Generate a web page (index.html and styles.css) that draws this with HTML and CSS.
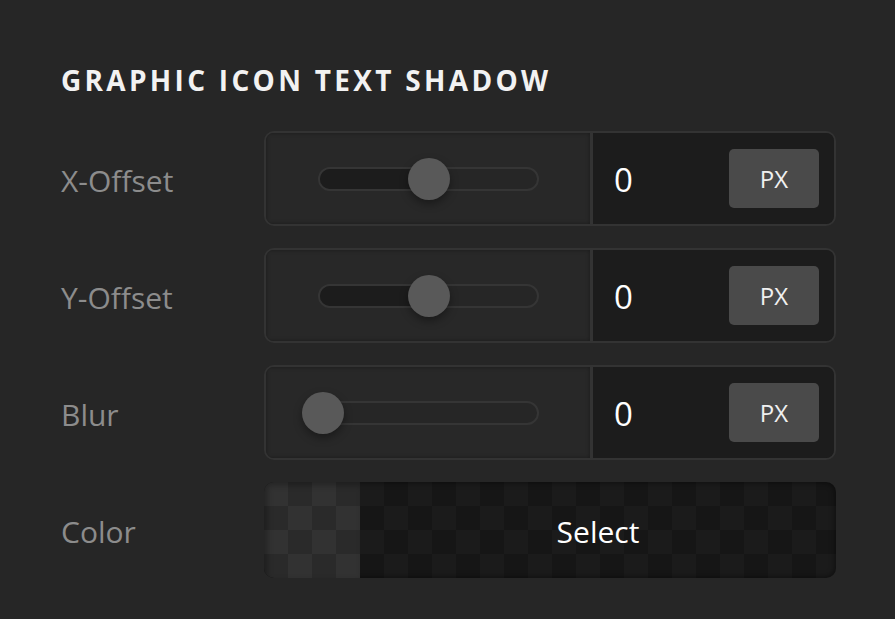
FILE: index.html
```html
<!DOCTYPE html>
<html>
<head>
<meta charset="utf-8">
<link rel="stylesheet" href="styles.css">
</head>
<body>
<div class="panel">
  <h2 class="title">GRAPHIC ICON TEXT SHADOW</h2>
  <div class="rows">
    <div class="row">
      <div class="label">X-Offset</div>
      <div class="control">
        <div class="slider-part">
          <div class="track">
            <div class="fill" style="width:50%"></div>
            <div class="thumb" style="left:50%"></div>
          </div>
        </div>
        <div class="value-part">
          <span class="value">0</span>
          <span class="unit">PX</span>
        </div>
      </div>
    </div>
    <div class="row">
      <div class="label">Y-Offset</div>
      <div class="control">
        <div class="slider-part">
          <div class="track">
            <div class="fill" style="width:50%"></div>
            <div class="thumb" style="left:50%"></div>
          </div>
        </div>
        <div class="value-part">
          <span class="value">0</span>
          <span class="unit">PX</span>
        </div>
      </div>
    </div>
    <div class="row">
      <div class="label">Blur</div>
      <div class="control">
        <div class="slider-part">
          <div class="track">
            <div class="fill" style="width:0%"></div>
            <div class="thumb" style="left:1.2%"></div>
          </div>
        </div>
        <div class="value-part">
          <span class="value">0</span>
          <span class="unit">PX</span>
        </div>
      </div>
    </div>
    <div class="row">
      <div class="label">Color</div>
      <div class="color-box">
        <div class="swatch"></div>
        <div class="select">Select</div>
      </div>
    </div>
  </div>
</div>
</body>
</html>
```
FILE: styles.css
```css
html, body {
  margin: 0;
  padding: 0;
  background: #262626;
  font-family: "Open Sans", "DejaVu Sans", sans-serif;
}
.panel {
  padding: 58px 59px 0 61px;
}
.title {
  margin: 0 0 29px 0;
  font-size: 28px;
  font-weight: 700;
  letter-spacing: 3.3px;
  color: #f2f2f2;
  line-height: 44px;
}
.rows {
  display: flex;
  flex-direction: column;
  gap: 22px;
}
.row {
  display: grid;
  grid-template-columns: 203px 572px;
  align-items: center;
}
.label {
  font-size: 30px;
  color: #8c8c8c;
  padding-top: 3px;
}
.control {
  display: flex;
  height: 95px;
  box-sizing: border-box;
  border: 2px solid #333333;
  border-radius: 10px;
  overflow: hidden;
}
.slider-part {
  width: 327px;
  background: #282828;
  border-right: 3px solid #333333;
  display: flex;
  align-items: center;
  padding-left: 52px;
  box-sizing: border-box;
  box-shadow: inset 0 0 4px rgba(0, 0, 0, 0.35);
}
.track {
  position: relative;
  width: 221px;
  height: 24px;
  box-sizing: border-box;
  border: 2px solid #353535;
  border-radius: 12px;
  background: #262626;
}
.fill {
  height: 100%;
  background: #1c1c1c;
  border-radius: 10px 0 0 10px;
}
.thumb {
  position: absolute;
  top: 50%;
  width: 42px;
  height: 42px;
  margin-left: -21px;
  margin-top: -21px;
  border-radius: 50%;
  background: #595959;
  box-shadow: 0 4px 8px rgba(0, 0, 0, 0.35);
}
.value-part {
  flex: 1;
  background: #1c1c1c;
  display: flex;
  align-items: center;
  justify-content: space-between;
  padding: 2px 15px 0 21px;
}
.value {
  font-size: 33px;
  color: #ffffff;
}
.unit {
  width: 90px;
  height: 59px;
  margin-top: -2px;
  border-radius: 5px;
  background: #4a4a4a;
  color: #f0f0f0;
  font-size: 24px;
  display: flex;
  align-items: center;
  justify-content: center;
}
.color-box {
  position: relative;
  height: 96px;
  border-radius: 10px;
  overflow: hidden;
  display: flex;
  background-image: conic-gradient(#161616 0 25%, #1b1b1b 0 50%, #161616 0 75%, #1b1b1b 0);
  background-size: 48px 48px;
  box-shadow: inset 0 0 6px rgba(0, 0, 0, 0.6);
}
.swatch {
  width: 96px;
  background-image: conic-gradient(#2a2a2a 0 25%, #323232 0 50%, #2a2a2a 0 75%, #323232 0);
  background-size: 48px 48px;
  box-shadow: inset 3px 3px 6px rgba(0, 0, 0, 0.3);
}
.select {
  flex: 1;
  display: flex;
  align-items: center;
  justify-content: center;
  font-size: 30px;
  color: #ffffff;
  padding-top: 2px;
}
```
